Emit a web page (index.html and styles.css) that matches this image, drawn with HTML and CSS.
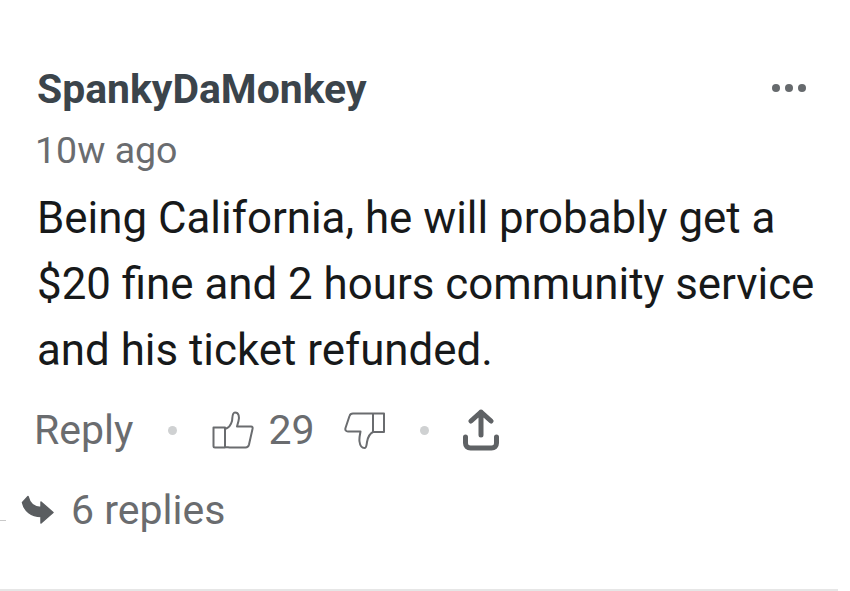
FILE: index.html
```html
<!DOCTYPE html>
<html lang="en">
<head>
<meta charset="utf-8">
<title>Comment</title>
<link rel="stylesheet" href="styles.css">
</head>
<body>
<article class="comment">
  <header class="head">
    <div class="author">SpankyDaMonkey</div>
    <svg class="more" viewBox="0 0 36 10" aria-hidden="true"><circle cx="5" cy="5" r="4"/><circle cx="18" cy="5" r="4"/><circle cx="31" cy="5" r="4"/></svg>
  </header>
  <div class="time">10w ago</div>
  <p class="body">Being California, he will probably get a<br>$20 fine and 2 hours community service<br>and his ticket refunded.</p>
  <div class="actions">
    <span class="reply">Reply</span>
    <span class="dot dot-a"></span>
    <svg class="thumb thumb-up" viewBox="0 0 42 38" aria-hidden="true"><path d="M1.500 16.500h11.500v20H3a1.500 1.500 0 0 1-1.500-1.500zM13 18c3.500-1 6-4 7-8 .6-2.500-.2-8.500 3-8.500 4 0 4.500 4.500 3.500 8.500l-1.500 5.500h14c1.500 0 2 1 1.500 2.500l-3.500 15.500c-.5 2-1.500 3-3.500 3H19c-2.500 0-3.500-.5-6-.5"/></svg>
    <span class="count">29</span>
    <svg class="thumb thumb-down" viewBox="0 0 42 40" aria-hidden="true"><path d="M29 3.500h11v18.500H29zM29 3.500H9c-2 0-3 .8-3.500 2.500L1.500 18c-.6 2 .4 3.500 2.500 3.500h12.500c-.6 4-1.500 6-1 10 .5 4 2.500 6.500 5 6.500 2 0 2-3 2.500-6 .7-4 2-8 6-10"/></svg>
    <span class="dot dot-b"></span>
    <svg class="share" viewBox="0 0 36 42" aria-hidden="true"><path d="M18 26V3M8 12l10-9 10 9M2.500 28v6c0 3 2 5 5 5h21c3 0 5-2 5-5v-6"/></svg>
  </div>
  <div class="replies">
    <span class="stub"></span>
    <svg class="arrow" viewBox="0 0 33 30" aria-hidden="true"><path d="M1.500 7.500 7 1.500C8.500 8 13 12.500 20 12.500V7l12 10.500L20 28v-6.500C10 21.500 3.500 16 1.500 7.500z"/></svg>
    <span class="replies-text">6 replies</span>
  </div>
</article>
<div class="rule"></div>
</body>
</html>
```
FILE: styles.css
```css
html, body {
  margin: 0;
  height: 591px;
  overflow: hidden;
  background: #fff;
}
body {
  display: flex;
  flex-direction: column;
  justify-content: space-between;
  font-family: Roboto, sans-serif;
  color: #6a6c6f;
}
.comment {
  padding: 66px 30px 0 37px;
}
.head {
  display: flex;
  justify-content: space-between;
  align-items: center;
  height: 46px;
}
.author {
  font-size: 40.900px;
  font-weight: 700;
  color: #3b444b;
  line-height: 46px;
}
.more {
  width: 36px;
  height: 10px;
  fill: #666a6d;
  margin: -2px 13px 0 0;
}
.time {
  font-size: 37.500px;
  line-height: 42px;
  margin: 17px 0 0 -2px;
}
.body {
  margin: 14px 0 0;
  font-size: 43.850px;
  line-height: 66px;
  color: #17191a;
  white-space: nowrap;
}
.actions {
  display: flex;
  align-items: center;
  height: 48px;
  margin: 23px 0 0 -3px;
  font-size: 41px;
}
.dot {
  width: 9px;
  height: 9px;
  border-radius: 50%;
  background: #cfd1d2;
}
.dot-a { margin-left: 35px; }
.dot-b { margin-left: 34px; }
.thumb {
  fill: none;
  stroke: #6a6c6f;
  stroke-width: 2;
  stroke-linejoin: round;
  stroke-linecap: round;
}
.thumb-up {
  width: 42px;
  height: 38px;
  margin-left: 35px;
}
.thumb-down {
  width: 42px;
  height: 40px;
  margin-left: 29px;
}
.count { margin-left: 14px; }
.share {
  width: 36px;
  height: 42px;
  margin-left: 34px;
  fill: none;
  stroke: #5f6265;
  stroke-width: 5;
  stroke-linecap: round;
  stroke-linejoin: round;
}
.replies {
  display: flex;
  align-items: center;
  height: 48px;
  margin: 32px 0 0 -37px;
  font-size: 41px;
  position: relative;
}
.stub {
  position: absolute;
  left: 0;
  top: 34px;
  width: 6px;
  height: 1px;
  background: #c9c9c9;
}
.arrow {
  width: 33px;
  height: 30px;
  margin-left: 21px;
  fill: #5a5d60;
  stroke: #5a5d60;
  stroke-width: 1.500;
  stroke-linejoin: round;
}
.replies-text { margin-left: 17px; }
.rule {
  width: 838px;
  height: 2px;
  background: #e6e6e6;
}
```
